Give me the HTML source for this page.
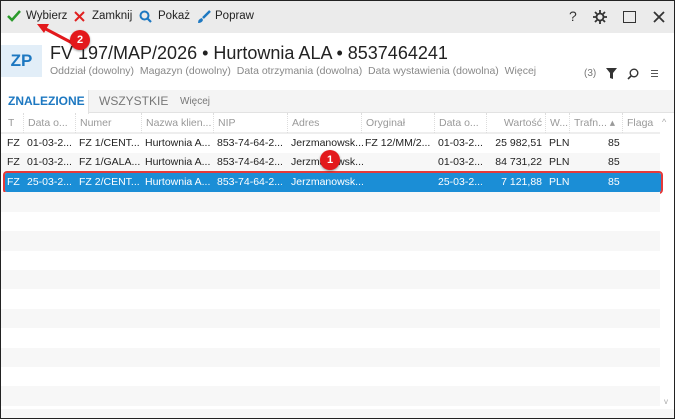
<!DOCTYPE html>
<html><head><meta charset="utf-8"><style>
*{box-sizing:border-box;margin:0;padding:0}
body{width:675px;height:419px;overflow:hidden;background:#fff;font-family:"Liberation Sans",sans-serif;position:relative;color:#222}
.win{position:absolute;left:0;top:0;width:675px;height:419px;border:1px solid #222}
.tb{position:absolute;left:1px;top:1px;width:673px;height:32px;background:#ebebeb}
.tb span{position:absolute;top:9px;font-size:11.5px;color:#222}
.abs{position:absolute}
.zp{position:absolute;left:1px;top:45px;width:41px;height:32px;background:#e2eef8;color:#1d78c1;font-size:17px;font-weight:bold;text-align:center;line-height:32px}
.title{position:absolute;left:50px;top:43px;font-size:18px;color:#222;white-space:nowrap}
.sub{position:absolute;left:50px;top:65px;font-size:10.5px;color:#888;white-space:nowrap}
.tabs{position:absolute;left:1px;top:90px;width:673px;height:23px;background:#f4f4f4;border-bottom:1px solid #e2e2e2}
.tab{position:absolute;top:0;height:23px;line-height:23px;font-size:11px;color:#777}
.hdr{position:absolute;top:113px;left:1px;width:659px;height:21px;border-bottom:2px solid #eee;font-size:10.5px;color:#999}
.row{position:absolute;left:1px;width:659px;height:19.4px;font-size:10.5px;line-height:19px}
.c{position:absolute;top:0;white-space:nowrap;overflow:hidden}
.hdr .c{line-height:20px;border-left:1px dotted #ddd;padding-left:4px;height:20px}
.g{background:#f7f7f7}
.sel{background:#1b8ed6;color:#fff}
.badge{position:absolute;width:20px;height:20px;border-radius:50%;background:#e3191c;color:#fff;font-size:11px;font-weight:bold;text-align:center;line-height:20px;box-shadow:0 1px 2px rgba(0,0,0,.4)}
</style></head><body>
<div class="win"></div>
<div class="tb">
<svg class="abs" style="left:6px;top:9px" width="14" height="12"><path d="M1 6 L5 10 L13 1" stroke="#2a9a2a" stroke-width="2.5" fill="none"/></svg>
<span style="left:25px">Wybierz</span>
<svg class="abs" style="left:73px;top:10px" width="11" height="11"><path d="M1 1L10 10M10 1L1 10" stroke="#e02020" stroke-width="2"/></svg>
<span style="left:91px">Zamknij</span>
<svg class="abs" style="left:138px;top:9px" width="13" height="13"><circle cx="5.5" cy="5.5" r="4" stroke="#1d78c1" stroke-width="2" fill="none"/><path d="M8.5 8.5L12 12" stroke="#1d78c1" stroke-width="2.2"/></svg>
<span style="left:157px">Pokaż</span>
<svg class="abs" style="left:196px;top:9px" width="14" height="14"><path d="M13 1L6 8" stroke="#1d78c1" stroke-width="2.5"/><path d="M5 8 Q1 9 1 13 Q5 13 6 10Z" fill="#1d78c1"/></svg>
<span style="left:214px">Popraw</span>
<span style="left:568px;top:7px;font-size:14px;color:#333">?</span>
<svg class="abs" style="left:592px;top:9px" width="14" height="14"><circle cx="7" cy="7" r="3.5" stroke="#333" stroke-width="1.8" fill="none"/><path d="M7 0V3M7 11V14M0 7H3M11 7H14M2 2L4 4M10 10L12 12M2 12L4 10M10 4L12 2" stroke="#333" stroke-width="1.8"/></svg>
<div class="abs" style="left:622px;top:10px;width:13px;height:12px;border:1.8px solid #333"></div>
<svg class="abs" style="left:652px;top:10px" width="12" height="12"><path d="M1 1L11 11M11 1L1 11" stroke="#333" stroke-width="1.8"/></svg>
</div>
<div class="zp">ZP</div>
<div class="title">FV 197/MAP/2026 • Hurtownia ALA • 8537464241</div>
<div class="sub">Oddział (dowolny) &nbsp;Magazyn (dowolny) &nbsp;Data otrzymania (dowolna) &nbsp;Data wystawienia (dowolna) &nbsp;Więcej</div>
<div class="abs" style="left:584px;top:68px;font-size:10px;color:#777">(3)</div>
<svg class="abs" style="left:606px;top:68px" width="11" height="11"><path d="M0 0H11L7 5V11L4 10V5Z" fill="#333"/></svg>
<svg class="abs" style="left:627px;top:68px" width="12" height="12"><circle cx="7" cy="5" r="3.8" stroke="#333" stroke-width="1.4" fill="none"/><path d="M4.2 7.8L1 11" stroke="#333" stroke-width="1.6"/></svg>
<div class="abs" style="left:651px;top:70px;width:7px;height:7px;border-top:1px solid #555;border-bottom:1px solid #555"><div style="margin-top:2px;border-top:1px solid #555"></div></div>
<div class="tabs">
<div class="tab" style="left:0;width:88px;background:#fff;border-right:1px solid #e2e2e2;height:24px;color:#1d78c1;font-weight:bold;font-size:12px;padding-left:7px">ZNALEZIONE</div>
<div class="tab" style="left:98px;font-size:12px">WSZYSTKIE</div>
<div class="tab" style="left:179px;font-size:10px">Więcej</div>
</div>
<div class="hdr">
<div class="c" style="left:0;border:0;padding-left:7px">T</div>
<div class="c" style="left:22px;width:52px">Data o...</div>
<div class="c" style="left:74px;width:66px">Numer</div>
<div class="c" style="left:140px;width:72px">Nazwa klien...</div>
<div class="c" style="left:212px;width:74px">NIP</div>
<div class="c" style="left:286px;width:74px">Adres</div>
<div class="c" style="left:360px;width:73px">Oryginał</div>
<div class="c" style="left:433px;width:52px">Data o...</div>
<div class="c" style="left:485px;width:59px;text-align:right;padding-right:3px">Wartość</div>
<div class="c" style="left:544px;width:24px">W...</div>
<div class="c" style="left:568px;width:53px">Trafn... ▴</div>
<div class="c" style="left:621px;width:38px">Flaga</div>
</div>
<div class="abs" style="left:662px;top:117px;font-size:9px;color:#aaa">^</div>
<div class="row" style="top:134px">
<div class="c" style="left:6px">FZ</div><div class="c" style="left:26px">01-03-2...</div><div class="c" style="left:78px">FZ 1/CENT...</div><div class="c" style="left:144px">Hurtownia A...</div><div class="c" style="left:216px">853-74-64-2...</div><div class="c" style="left:290px">Jerzmanowsk...</div><div class="c" style="left:364px">FZ 12/MM/2...</div><div class="c" style="left:437px">01-03-2...</div><div class="c" style="left:485px;width:56px;text-align:right">25 982,51</div><div class="c" style="left:548px">PLN</div><div class="c" style="left:607px">85</div>
</div>
<div class="row g" style="top:153.4px">
<div class="c" style="left:6px">FZ</div><div class="c" style="left:26px">01-03-2...</div><div class="c" style="left:78px">FZ 1/GALA...</div><div class="c" style="left:144px">Hurtownia A...</div><div class="c" style="left:216px">853-74-64-2...</div><div class="c" style="left:290px">Jerzmanowsk...</div><div class="c" style="left:437px">01-03-2...</div><div class="c" style="left:485px;width:56px;text-align:right">84 731,22</div><div class="c" style="left:548px">PLN</div><div class="c" style="left:607px">85</div>
</div>
<div class="row sel" style="top:173px;left:5px;width:656px;height:19px;border-radius:2px;outline:2px solid #e53a3a"></div>
<div class="row" style="top:173px;color:#fff">
<div class="c" style="left:6px">FZ</div><div class="c" style="left:26px">25-03-2...</div><div class="c" style="left:78px">FZ 2/CENT...</div><div class="c" style="left:144px">Hurtownia A...</div><div class="c" style="left:216px">853-74-64-2...</div><div class="c" style="left:290px">Jerzmanowsk...</div><div class="c" style="left:437px">25-03-2...</div><div class="c" style="left:485px;width:56px;text-align:right">7 121,88</div><div class="c" style="left:548px">PLN</div><div class="c" style="left:607px">85</div>
</div>
<div class="row g" style="top:192.4px"></div>
<div class="row g" style="top:231.2px"></div>
<div class="row g" style="top:270px"></div>
<div class="row g" style="top:308.8px"></div>
<div class="row g" style="top:347.6px"></div>
<div class="row g" style="top:386.4px"></div>
<div class="abs" style="left:1px;top:409px;width:673px;height:9px;background:#f7f7f7"></div>
<div class="abs" style="left:664px;top:397px;font-size:8px;color:#aaa">v</div>
<svg class="abs" style="left:30px;top:18px" width="60" height="36"><path d="M48 28 L12 9" stroke="#e3191c" stroke-width="3"/><path d="M7 6 L19 6 L14 15Z" fill="#e3191c"/></svg>
<div class="badge" style="left:70px;top:30px">2</div>
<div class="badge" style="left:320px;top:150px">1</div>
</body></html>
